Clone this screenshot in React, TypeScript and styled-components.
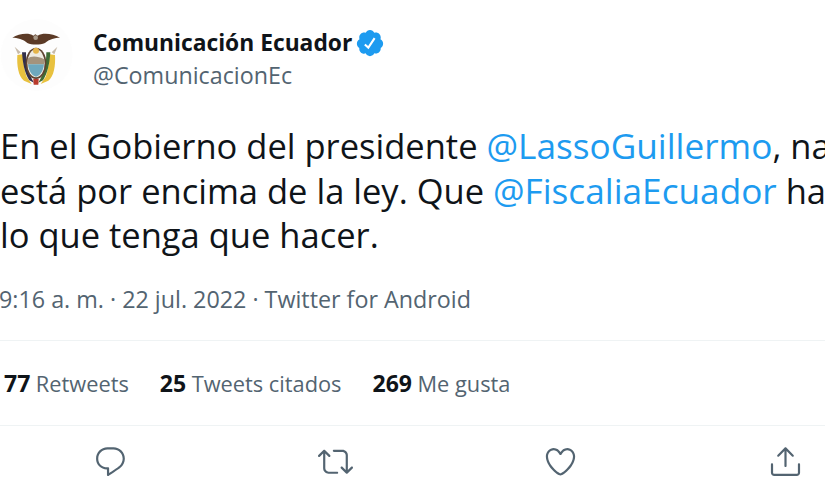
import React from "react";
import styled, { createGlobalStyle } from "styled-components";

const Global = createGlobalStyle`
  html, body { margin: 0; padding: 0; background: #fff; }
  body { width: 825px; height: 495px; overflow: hidden; font-family: "Open Sans", "Liberation Sans", sans-serif; }
`;
const Page = styled.div`
  width: 825px; height: 495px; overflow: hidden; display: flex; flex-direction: column; background: #fff; color: #0f1419;
`;
const Header = styled.header`
  display: flex; align-items: flex-start; gap: 13px; padding-top: 15px; height: 80px;
`;
const Avatar = styled.svg`
  width: 80px; height: 80px; flex: none;
`;
const Names = styled.div`
  display: flex; flex-direction: column; gap: 4px; padding-top: 13px;
`;
const NameRow = styled.div`
  display: flex; align-items: center; gap: 3px; height: 30px; font-size: 22.8px; line-height: 30px; font-weight: 700;
`;
const Handle = styled.div`
  font-size: 23.3px; line-height: 26px; color: #536471;
`;
const Body = styled.div`
  margin-top: 29px; font-size: 34.5px; line-height: 44.5px; white-space: nowrap;
`;
const Mention = styled.span`
  color: #1d9bf0; font-size: 35.2px; line-height: 1;
`;
const Meta = styled.div`
  margin-top: 25px; font-size: 23.3px; line-height: 32px; color: #536471; white-space: nowrap; margin-left: -1px;
`;
const Stats = styled.div`
  margin-top: 25px; height: 84px; border-top: 1px solid #eff3f4; border-bottom: 1px solid #eff3f4;
  display: flex; align-items: center; gap: 31px; padding-left: 4px; font-size: 21.8px; color: #536471;
`;
const Stat = styled.span`
  display: inline-flex; gap: 5.5px; align-items: baseline;
`;
const Count = styled.b`
  color: #0f1419; font-weight: 700; font-size: 23px;
`;
const Actions = styled.div`
  display: flex; justify-content: space-between; padding: 18px 22px 0 93px; color: #536471;
`;
const ActionIcon = styled.svg`
  width: 35px; height: 35px; fill: currentColor;
`;

const Badge = () => (
  <svg width="30" height="30" viewBox="0 0 24 24">
    <path fill="#1d9bf0" d="M22.5 12.5c0-1.58-.875-2.95-2.148-3.6.154-.435.238-.905.238-1.4 0-2.21-1.71-3.998-3.818-3.998-.47 0-.92.084-1.336.25C14.818 2.415 13.51 1.5 12 1.5s-2.816.917-3.437 2.25c-.415-.165-.866-.25-1.336-.25-2.11 0-3.818 1.79-3.818 4 0 .494.083.964.237 1.4-1.272.65-2.147 2.018-2.147 3.6 0 1.495.782 2.798 1.942 3.486-.02.17-.032.34-.032.514 0 2.21 1.708 4 3.818 4 .47 0 .92-.086 1.335-.25.62 1.334 1.926 2.25 3.437 2.25 1.512 0 2.818-.916 3.437-2.25.415.163.865.248 1.336.248 2.11 0 3.818-1.79 3.818-4 0-.174-.012-.344-.033-.513 1.158-.687 1.943-1.99 1.943-3.484z" />
    <path fill="#fff" d="M16.4 8.5l-5.6 8.4-3.5-3.2 1.1-1.2 2.1 1.9 4.5-6.8z" />
  </svg>
);

const App = () => (
  <Page>
    <Global />
    <Header>
      <Avatar viewBox="0 0 240 240">
        <circle cx="110" cy="120" r="108" fill="#fdfdfd" />
        <path d="M37 68 C55 57 85 52 100 62 L106 58 L113 62 C130 52 160 57 180 68 C165 68 148 72 135 84 C120 90 95 90 82 84 C70 72 52 68 37 68Z" fill="#5b3a26" />
        <circle cx="107" cy="68" r="7" fill="#a89a8a" />
        <path d="M52 120 C50 150 55 185 72 197 L95 207 L80 185 C72 165 70 140 68 118Z" fill="#e8c13e" />
        <path d="M165 120 C167 150 162 185 145 197 L122 207 L137 185 C145 165 147 140 149 118Z" fill="#e8c13e" />
        <path d="M66 112 L78 112 C78 145 84 175 102 203 L88 196 C74 175 68 145 66 112Z" fill="#33304a" />
        <path d="M151 112 L139 112 C139 145 133 175 115 203 L129 196 C143 175 149 145 151 112Z" fill="#3f6b34" />
        <path d="M44 95 L62 112 L54 118Z" fill="#c7baa9" />
        <path d="M172 95 L155 112 L163 118Z" fill="#c7baa9" />
        <ellipse cx="108" cy="145" rx="31" ry="47" fill="#5f4330" />
        <ellipse cx="108" cy="145" rx="26" ry="42" fill="#efece2" />
        <path d="M83 131 C92 122 112 122 133 133 L133 148 L83 148Z" fill="#a4937c" />
        <path d="M84 148 L132 148 C130 170 118 184 108 185 C98 184 86 170 84 148Z" fill="#6ea8bd" />
        <circle cx="108" cy="107" r="9" fill="#e6b54a" />
        <path d="M100 192 L116 192 L115 209 L101 209Z" fill="#b93a2b" />
      </Avatar>
      <Names>
        <NameRow>Comunicación Ecuador <Badge /></NameRow>
        <Handle>@ComunicacionEc</Handle>
      </Names>
    </Header>
    <Body>
      <div>En el Gobierno del presidente <Mention>@LassoGuillermo</Mention>, nadie</div>
      <div>está por encima de la ley. Que <Mention>@FiscaliaEcuador</Mention> haga</div>
      <div>lo que tenga que hacer.</div>
    </Body>
    <Meta>9:16 a. m. · 22 jul. 2022 · Twitter for Android</Meta>
    <Stats>
      <Stat><Count>77</Count> Retweets</Stat>
      <Stat><Count>25</Count> Tweets citados</Stat>
      <Stat><Count>269</Count> Me gusta</Stat>
    </Stats>
    <Actions>
      <ActionIcon viewBox="0 0 24 24"><path d="M14.046 2.242l-4.148-.01h-.002c-4.374 0-7.8 3.427-7.8 7.802 0 4.098 3.186 7.206 7.465 7.37v3.828c0 .108.044.286.12.403.142.225.384.347.632.347.138 0 .277-.038.402-.118.264-.168 6.473-4.14 8.088-5.506 1.902-1.61 3.04-3.97 3.043-6.312v-.017c-.006-4.367-3.43-7.787-7.8-7.788zm3.787 12.972c-1.134.96-4.862 3.405-6.772 4.643V16.67c0-.414-.335-.75-.75-.75h-.396c-3.66 0-6.318-2.476-6.318-5.886 0-3.534 2.768-6.302 6.3-6.302l4.147.01h.002c3.532 0 6.3 2.766 6.302 6.296-.003 1.91-.942 3.844-2.514 5.176z" /></ActionIcon>
      <ActionIcon viewBox="0 0 24 24"><path d="M23.77 15.67c-.292-.293-.767-.293-1.06 0l-2.22 2.22V7.65c0-2.068-1.683-3.75-3.75-3.75h-5.85c-.414 0-.75.336-.75.75s.336.75.75.75h5.85c1.24 0 2.25 1.01 2.25 2.25v10.24l-2.22-2.22c-.293-.293-.768-.293-1.06 0s-.294.768 0 1.06l3.5 3.5c.145.147.337.22.53.22s.383-.072.53-.22l3.5-3.5c.294-.292.294-.767 0-1.06zm-10.66 3.28H7.26c-1.24 0-2.25-1.01-2.25-2.25V6.46l2.22 2.22c.148.147.34.22.532.22s.384-.073.53-.22c.293-.293.293-.768 0-1.06l-3.5-3.5c-.293-.294-.768-.294-1.06 0l-3.5 3.5c-.294.292-.294.767 0 1.06s.767.293 1.06 0l2.22-2.22V16.7c0 2.068 1.683 3.75 3.75 3.75h5.85c.414 0 .75-.336.75-.75s-.337-.75-.75-.75z" /></ActionIcon>
      <ActionIcon viewBox="0 0 24 24"><path d="M12 21.638h-.014C9.403 21.59 1.95 14.856 1.95 8.478c0-3.064 2.525-5.754 5.403-5.754 2.29 0 3.83 1.58 4.646 2.73.814-1.148 2.354-2.73 4.645-2.73 2.88 0 5.404 2.69 5.404 5.755 0 6.376-7.454 13.11-10.037 13.157H12zM7.354 4.225c-2.08 0-3.903 1.988-3.903 4.255 0 5.74 7.034 11.596 8.55 11.658 1.518-.062 8.55-5.917 8.55-11.658 0-2.267-1.823-4.255-3.903-4.255-2.528 0-3.94 2.936-3.952 2.965-.23.562-1.156.562-1.387 0-.014-.03-1.425-2.965-3.954-2.965z" /></ActionIcon>
      <ActionIcon viewBox="0 0 24 24"><path d="M17.53 7.47l-5-5c-.293-.293-.768-.293-1.06 0l-5 5c-.294.293-.294.768 0 1.06s.767.294 1.06 0l3.72-3.72V15c0 .414.336.75.75.75s.75-.336.75-.75V4.81l3.72 3.72c.146.147.338.22.53.22s.384-.072.53-.22c.293-.293.293-.767 0-1.06z" /><path d="M19.708 21.944H4.292C3.028 21.944 2 20.916 2 19.652V14c0-.414.336-.75.75-.75s.75.336.75.75v5.652c0 .437.355.792.792.792h15.416c.437 0 .792-.355.792-.792V14c0-.414.336-.75.75-.75s.75.336.75.75v5.652c0 1.264-1.028 2.292-2.292 2.292z" /></ActionIcon>
    </Actions>
  </Page>
);
export default App;
